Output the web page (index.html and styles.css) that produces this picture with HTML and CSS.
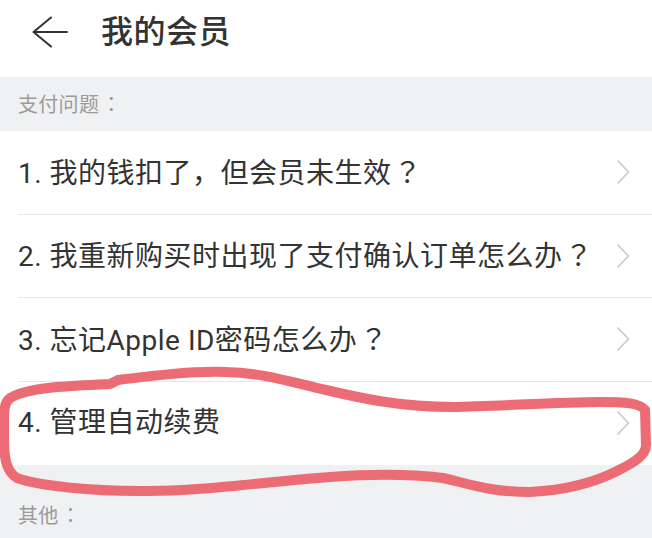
FILE: index.html
```html
<!DOCTYPE html>
<html lang="zh-CN">
<head>
<meta charset="utf-8">
<title>我的会员</title>
<link rel="stylesheet" href="styles.css">
</head>
<body>
<div class="page">
  <header class="topbar">
    <svg class="back" width="36" height="32" viewBox="0 0 36 32" aria-hidden="true">
      <path d="M1.5 16 H35 M19 1.5 L1.5 16 L19 30.5" fill="none" stroke="#333" stroke-width="2" stroke-linecap="round" stroke-linejoin="round"/>
    </svg>
    <h1 class="title">我的会员</h1>
  </header>

  <div class="section-label">支付问题<span class="punct" lang="zh-TW">：</span></div>

  <ul class="list">
    <li class="item"><div class="item-inner"><span class="item-text">1. 我的钱扣了，但会员未生效<span class="punct" lang="zh-TW">？</span></span><svg class="chev" width="14" height="26" viewBox="0 0 14 26"><path d="M1.5 1.5 L12.5 13 L1.5 24.5" fill="none" stroke="#c9c9c9" stroke-width="1.6"/></svg></div></li>
    <li class="item"><div class="item-inner"><span class="item-text">2. 我重新购买时出现了支付确认订单怎么办<span class="punct" lang="zh-TW">？</span></span><svg class="chev" width="14" height="26" viewBox="0 0 14 26"><path d="M1.5 1.5 L12.5 13 L1.5 24.5" fill="none" stroke="#c9c9c9" stroke-width="1.6"/></svg></div></li>
    <li class="item"><div class="item-inner"><span class="item-text">3. 忘记Apple ID密码怎么办<span class="punct" lang="zh-TW">？</span></span><svg class="chev" width="14" height="26" viewBox="0 0 14 26"><path d="M1.5 1.5 L12.5 13 L1.5 24.5" fill="none" stroke="#c9c9c9" stroke-width="1.6"/></svg></div></li>
    <li class="item"><div class="item-inner"><span class="item-text">4. 管理自动续费</span><svg class="chev" width="14" height="26" viewBox="0 0 14 26"><path d="M1.5 1.5 L12.5 13 L1.5 24.5" fill="none" stroke="#c9c9c9" stroke-width="1.6"/></svg></div></li>
  </ul>

  <div class="section-label section-label--other">其他<span class="punct" lang="zh-TW">：</span></div>

  <svg class="scribble" width="652" height="538" viewBox="0 0 652 538" aria-hidden="true">
    <path d="M12 397 C30 387, 70 386, 110 384 L118 380 C150 376, 190 371, 225 372 C265 373, 290 382, 326 390 C360 398, 400 407, 453 407 C500 406, 560 402, 600 402 C625 402, 640 403, 645 410 L646 445 C646 455, 635 462, 619 470 C600 480, 570 490, 530 492 C490 492, 470 484, 443 478 C410 474, 370 474, 330 477 C270 481, 200 492, 140 491 C90 491, 40 486, 17 478 C7 472, 4 460, 4 440 L4 420 C4 405, 6 400, 12 397 Z" fill="none" stroke="#ec6c75" stroke-width="10" stroke-linejoin="round" stroke-linecap="round"/>
  </svg>
</div>
</body>
</html>
```

FILE: styles.css
```css
* { box-sizing: border-box; }

html, body {
  margin: 0;
  padding: 0;
  background: #f0f1f3;
}

body {
  font-family: Roboto, "Noto Sans CJK SC", "Noto Sans", sans-serif;
  color: #333;
}

.page {
  position: relative;
  width: 652px;
  height: 538px;
  overflow: hidden;
  background: #f0f1f3;
}

.topbar {
  height: 77px;
  padding: 0 0 13px 32px;
  background: #fff;
  display: flex;
  align-items: center;
  gap: 33px;
}

.back { display: block; flex: none; }

.title {
  margin: 0;
  font-size: 32px;
  line-height: 40px;
  font-weight: 500;
  color: #333;
  letter-spacing: 0.5px;
}

.section-label {
  height: 54px;
  padding-left: 18px;
  font-size: 20px;
  line-height: 54px;
  color: #9b9b9b;
  letter-spacing: 0.3px;
}

.section-label--other {
  height: auto;
  padding-top: 38px;
  line-height: 24px;
}

.punct {
  font-family: "Noto Sans CJK TC", "Noto Sans CJK SC", sans-serif;
  margin-left: 2px;
}

.list {
  list-style: none;
  margin: 0;
  padding: 0;
  background: #fff;
}

.item { padding-left: 18px; }

.item-inner {
  height: 83.5px;
  padding-right: 22px;
  display: flex;
  align-items: center;
  justify-content: space-between;
  border-bottom: 1px solid #e6e6e6;
}

.item:last-child .item-inner { border-bottom: none; }

.item-text {
  font-size: 28px;
  line-height: 36px;
  color: #333;
  letter-spacing: 0.5px;
  white-space: nowrap;
}

.chev { display: block; flex: none; }

.scribble {
  position: absolute;
  left: 0;
  top: 0;
  pointer-events: none;
}
```
